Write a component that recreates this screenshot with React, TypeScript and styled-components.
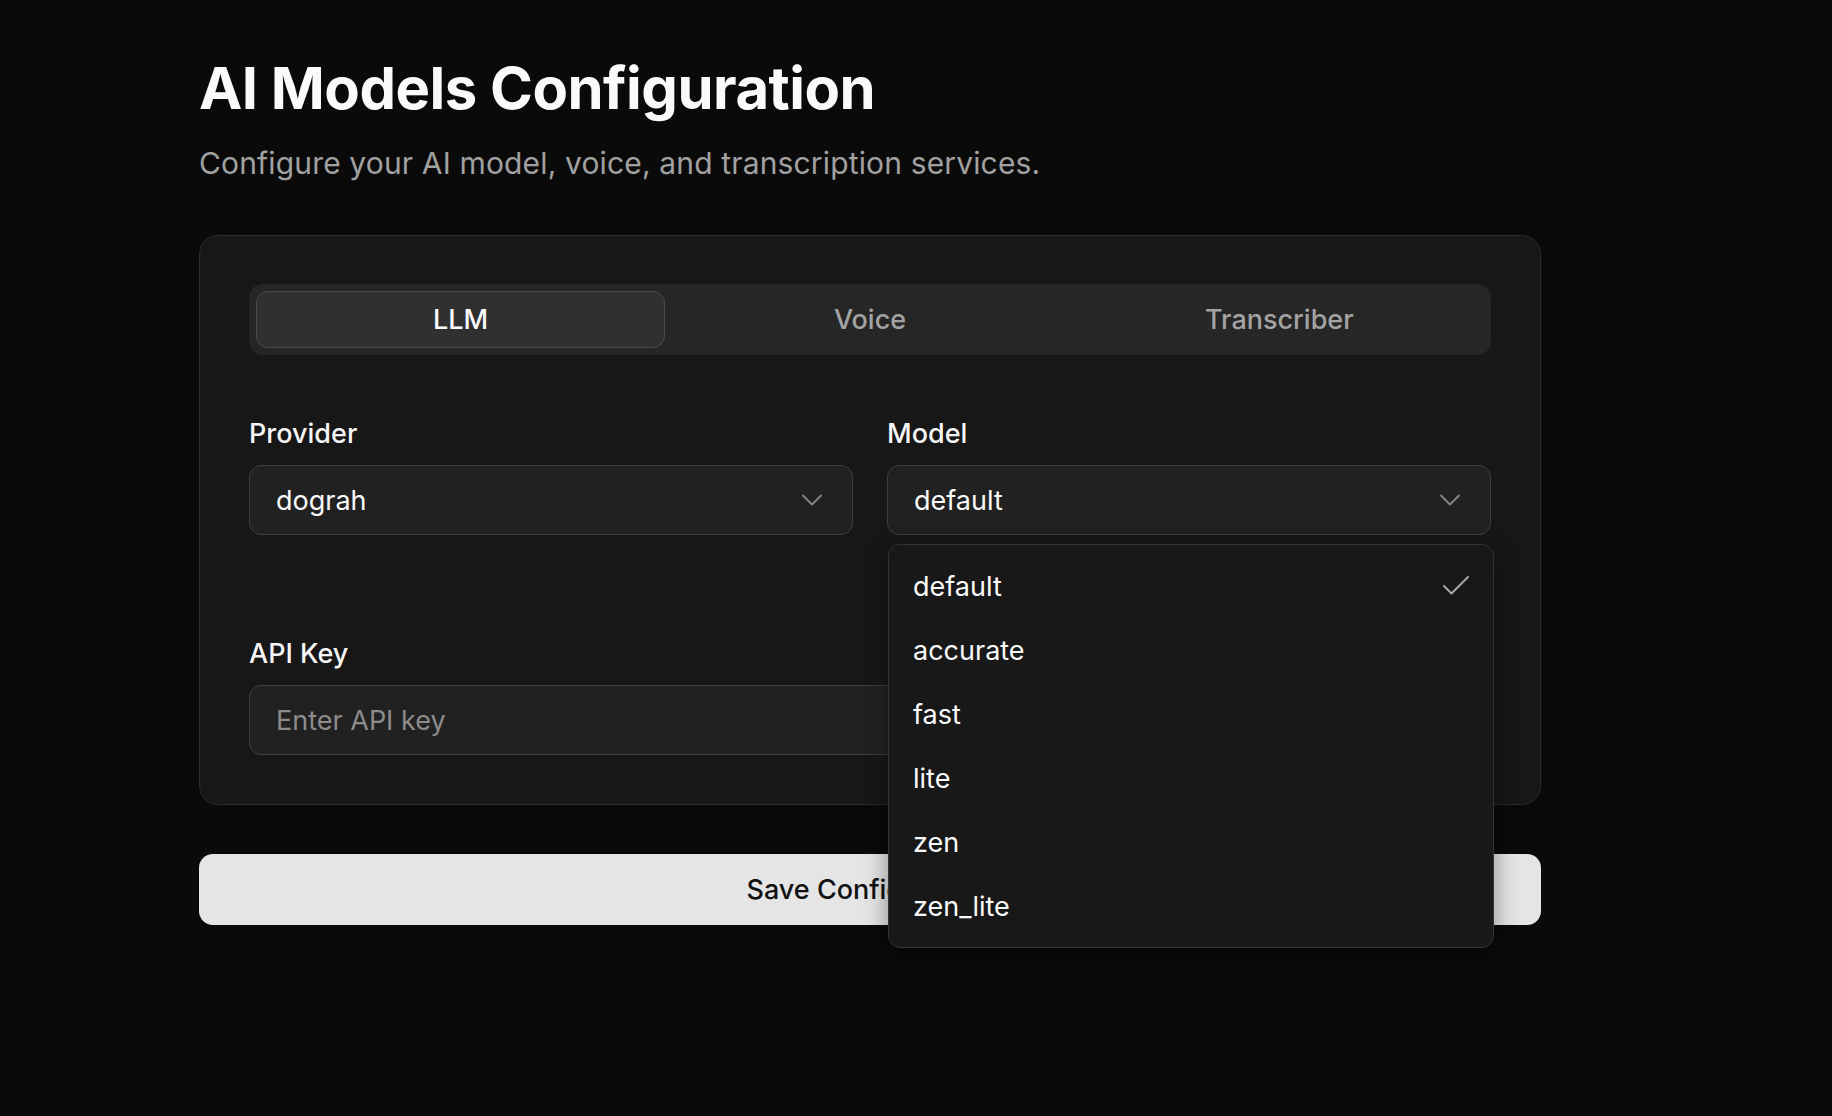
import React from 'react';
import styled, { createGlobalStyle } from 'styled-components';
import { Check, ChevronDown } from 'lucide-react';

const GlobalStyle = createGlobalStyle`
  * {
    box-sizing: border-box;
  }

  html,
  body {
    margin: 0;
    padding: 0;
    background-color: #0a0a0a;
    font-family: Inter, 'Noto Sans', 'Liberation Sans', sans-serif;
    color: #fafafa;
  }
`;

const Page = styled.main`
  min-height: 1116px;
  padding: 52px 0 0 199px;
`;

const Content = styled.div`
  width: 1342px;
  display: flex;
  flex-direction: column;
`;

const Title = styled.h1`
  margin: 0;
  font-size: 58px;
  line-height: 72px;
  font-weight: 700;
  letter-spacing: -0.5px;
  color: #fafafa;
`;

const Subtitle = styled.p`
  margin: 21px 0 0;
  font-size: 30px;
  line-height: 36px;
  font-weight: 400;
  letter-spacing: 0.15px;
  color: #a1a1a1;
`;

const Card = styled.section`
  margin-top: 54px;
  padding: 48px 49px 49px;
  border: 1px solid #2b2b2b;
  border-radius: 19px;
  background-color: #171717;
`;

// tabs
const TabList = styled.div`
  display: grid;
  grid-template-columns: repeat(3, 1fr);
  padding: 7px;
  height: 71px;
  border-radius: 14px;
  background-color: #262626;
`;

const Tab = styled.button<{ $active?: boolean }>`
  display: flex;
  align-items: center;
  justify-content: center;
  border: 1px solid ${({ $active }) => ($active ? '#4a4a4a' : 'transparent')};
  border-radius: 12px;
  background-color: ${({ $active }) => ($active ? '#303030' : 'transparent')};
  color: ${({ $active }) => ($active ? '#fafafa' : '#a3a3a3')};
  font: inherit;
  font-size: 27px;
  font-weight: 500;
  cursor: pointer;
`;

const FieldGrid = styled.div`
  display: grid;
  grid-template-columns: 1fr 1fr;
  column-gap: 34px;
  margin-top: 64px;
`;

const Field = styled.div<{ $wide?: boolean }>`
  position: relative;
  display: flex;
  flex-direction: column;
  gap: 16px;
  grid-column: ${({ $wide }) => ($wide ? '1 / -1' : 'auto')};
  margin-top: ${({ $wide }) => ($wide ? '104px' : '0')};
`;

const Label = styled.label`
  font-size: 27px;
  line-height: 30px;
  font-weight: 500;
  color: #f5f5f5;
`;

const SelectBox = styled.button`
  display: flex;
  align-items: center;
  justify-content: space-between;
  height: 70px;
  padding: 0 22px 0 26px;
  border: 1px solid #3d3d3d;
  border-radius: 12px;
  background-color: #212121;
  color: #fafafa;
  font: inherit;
  font-size: 27px;
  text-align: left;

  & > svg {
    color: #858585;
  }
`;

const TextInput = styled.input`
  height: 70px;
  padding: 0 26px;
  border: 1px solid #3d3d3d;
  border-radius: 12px;
  background-color: #212121;
  color: #fafafa;
  font: inherit;
  font-size: 27px;
  outline: none;

  &::placeholder {
    color: #8c8c8c;
  }
`;

const SaveButton = styled.button`
  margin-top: 49px;
  height: 71px;
  border: none;
  border-radius: 14px;
  background-color: #e5e5e5;
  color: #111111;
  font: inherit;
  font-size: 27px;
  font-weight: 500;
  cursor: pointer;
`;

// model dropdown menu
const Menu = styled.ul`
  position: absolute;
  top: 125px;
  left: 1px;
  right: -3px;
  z-index: 10;
  margin: 0;
  padding: 9px 0;
  list-style: none;
  border: 1px solid #333333;
  border-radius: 12px;
  background-color: #181818;
  box-shadow: 0 8px 24px rgba(0, 0, 0, 0.4);
`;

const MenuItem = styled.li`
  display: flex;
  align-items: center;
  justify-content: space-between;
  height: 64px;
  padding: 0 19px 0 24px;
  font-size: 27px;
  color: #fafafa;

  & > svg {
    color: #a8a8a8;
  }
`;

const tabs = ['LLM', 'Voice', 'Transcriber'];
const models = ['default', 'accurate', 'fast', 'lite', 'zen', 'zen_lite'];

export default function App() {
  const selected = 'default';

  return (
    <>
      <GlobalStyle />
      <Page>
        <Content>
          <Title>AI Models Configuration</Title>
          <Subtitle>Configure your AI model, voice, and transcription services.</Subtitle>

          <Card>
            <TabList>
              {tabs.map((t) => (
                <Tab key={t} $active={t === 'LLM'}>
                  {t}
                </Tab>
              ))}
            </TabList>

            <FieldGrid>
              <Field>
                <Label>Provider</Label>
                <SelectBox>
                  dograh
                  <ChevronDown size={36} strokeWidth={1.3} />
                </SelectBox>
              </Field>

              <Field>
                <Label>Model</Label>
                <SelectBox>
                  {selected}
                  <ChevronDown size={36} strokeWidth={1.3} />
                </SelectBox>
                <Menu>
                  {models.map((m) => (
                    <MenuItem key={m}>
                      {m}
                      {m === selected && <Check size={36} strokeWidth={1.3} />}
                    </MenuItem>
                  ))}
                </Menu>
              </Field>

              <Field $wide>
                <Label>API Key</Label>
                <TextInput placeholder="Enter API key" />
              </Field>
            </FieldGrid>
          </Card>

          <SaveButton>Save Configuration</SaveButton>
        </Content>
      </Page>
    </>
  );
}
